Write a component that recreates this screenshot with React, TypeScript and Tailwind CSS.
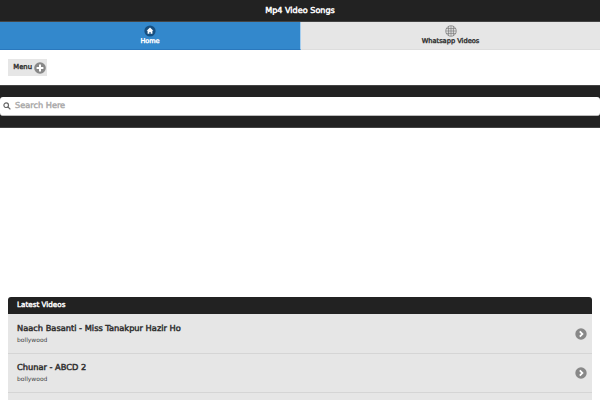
const font = { fontFamily: '"DejaVu Sans", sans-serif' };

function Row({ title, first }: { title: string; first?: boolean }) {
  return (
    <div
      className={
        first
          ? "flex h-[40px] shrink-0 items-center justify-between border-b border-[#d5d5d5] bg-[#e6e6e6] pl-[9px] pr-[5px]"
          : "flex h-[39px] shrink-0 items-center justify-between border-b border-[#d5d5d5] bg-[#e6e6e6] pl-[9px] pr-[5px]"
      }
    >
      <div className="flex flex-col">
        <div className="text-[8.25px] font-normal [-webkit-text-stroke:0.45px_currentColor] leading-[12px] text-[#2f2f2f]">{title}</div>
        <div className="mt-[2px] text-[6px] leading-[10px] text-[#444]">bollywood</div>
      </div>
      <svg width="12" height="12" viewBox="0 0 12 12">
        <circle cx="6" cy="6" r="5.7" fill="#888" />
        <path d="M4.8 3.4 7.4 6 4.8 8.6" fill="none" stroke="#fff" strokeWidth="1.8" />
      </svg>
    </div>
  );
}

export default function App() {
  return (
    <div style={font} className="flex h-[400px] w-[600px] flex-col overflow-hidden bg-white antialiased [text-rendering:geometricPrecision]">
      <div className="flex h-[22px] shrink-0 items-center justify-center border-b border-[#444] bg-[#222] text-[8.1px] font-normal [-webkit-text-stroke:0.45px_currentColor] text-white">
        Mp4 Video Songs
      </div>
      <div className="flex h-[28px] shrink-0">
        <div className="flex w-[301px] flex-col items-center border-r border-b border-r-[#a5cdee] border-b-[#2a78bd] bg-[#3388cc] pt-[3px]">
          <svg width="12" height="12" viewBox="0 0 12 12">
            <circle cx="6" cy="6" r="5.6" fill="#174f80" />
            <path d="M6 2.4 2.6 5.8h1v3h1.8V6.9h1.2v1.9h1.8v-3h1z" fill="#fff" />
          </svg>
          <div className="text-[6.5px] font-normal [-webkit-text-stroke:0.4px_currentColor] leading-[9px] text-white">Home</div>
        </div>
        <div className="flex w-[299px] flex-col items-center border-b border-[#ddd] bg-[#e6e6e6] pt-[3px]">
          <svg width="12" height="12" viewBox="0 0 12 12" fill="none" stroke="#777" strokeWidth="0.7">
            <circle cx="6" cy="6" r="5.3" />
            <path d="M1.2 3.6h9.6M1 6h10M1.2 8.4h9.6M3.6 1.2v9.6M6 1v10M8.4 1.2v9.6" />
          </svg>
          <div className="text-[6.65px] font-normal [-webkit-text-stroke:0.4px_currentColor] leading-[9px] text-[#333]">Whatsapp Videos</div>
        </div>
      </div>
      <div className="flex h-[35px] shrink-0 items-center px-2">
        <div className="flex h-[17px] w-[39px] items-center justify-end gap-[2px] bg-[#e6e6e6] pr-[1px]">
          <span className="text-[6.8px] font-normal [-webkit-text-stroke:0.4px_currentColor] text-[#333]">Menu</span>
          <svg width="12" height="12" viewBox="0 0 12 12">
            <circle cx="6" cy="6" r="5.8" fill="#888" />
            <path d="M6 2.6v6.8M2.6 6h6.8" stroke="#fff" strokeWidth="2" />
          </svg>
        </div>
      </div>
      <div className="flex h-[43px] shrink-0 items-center border-y border-[#444] bg-[#222]">
        <div className="flex h-[19px] w-full items-center gap-[4px] rounded-[3px] border-b border-[#bbb] bg-white pl-[3px]">
          <svg width="8" height="8" viewBox="0 0 8 8" fill="none" stroke="#666" strokeWidth="1.2">
            <circle cx="3.2" cy="3.2" r="2.3" />
            <path d="M5 5l2.4 2.4" />
          </svg>
          <span className="pb-[1px] text-[8.2px] font-normal [-webkit-text-stroke:0.45px_currentColor] text-[#aaa]">Search Here</span>
        </div>
      </div>
      <div className="mt-[169px] flex flex-col px-2">
        <div className="flex h-[17px] shrink-0 items-center rounded-t-[3px] bg-[#222] pl-[9px] text-[7.2px] font-normal [-webkit-text-stroke:0.4px_currentColor] text-white">
          Latest Videos
        </div>
        <Row first title="Naach Basanti - Miss Tanakpur Hazir Ho" />
        <Row title="Chunar - ABCD 2" />
        <div className="h-[20px] shrink-0 bg-[#e6e6e6]" />
      </div>
    </div>
  );
}
